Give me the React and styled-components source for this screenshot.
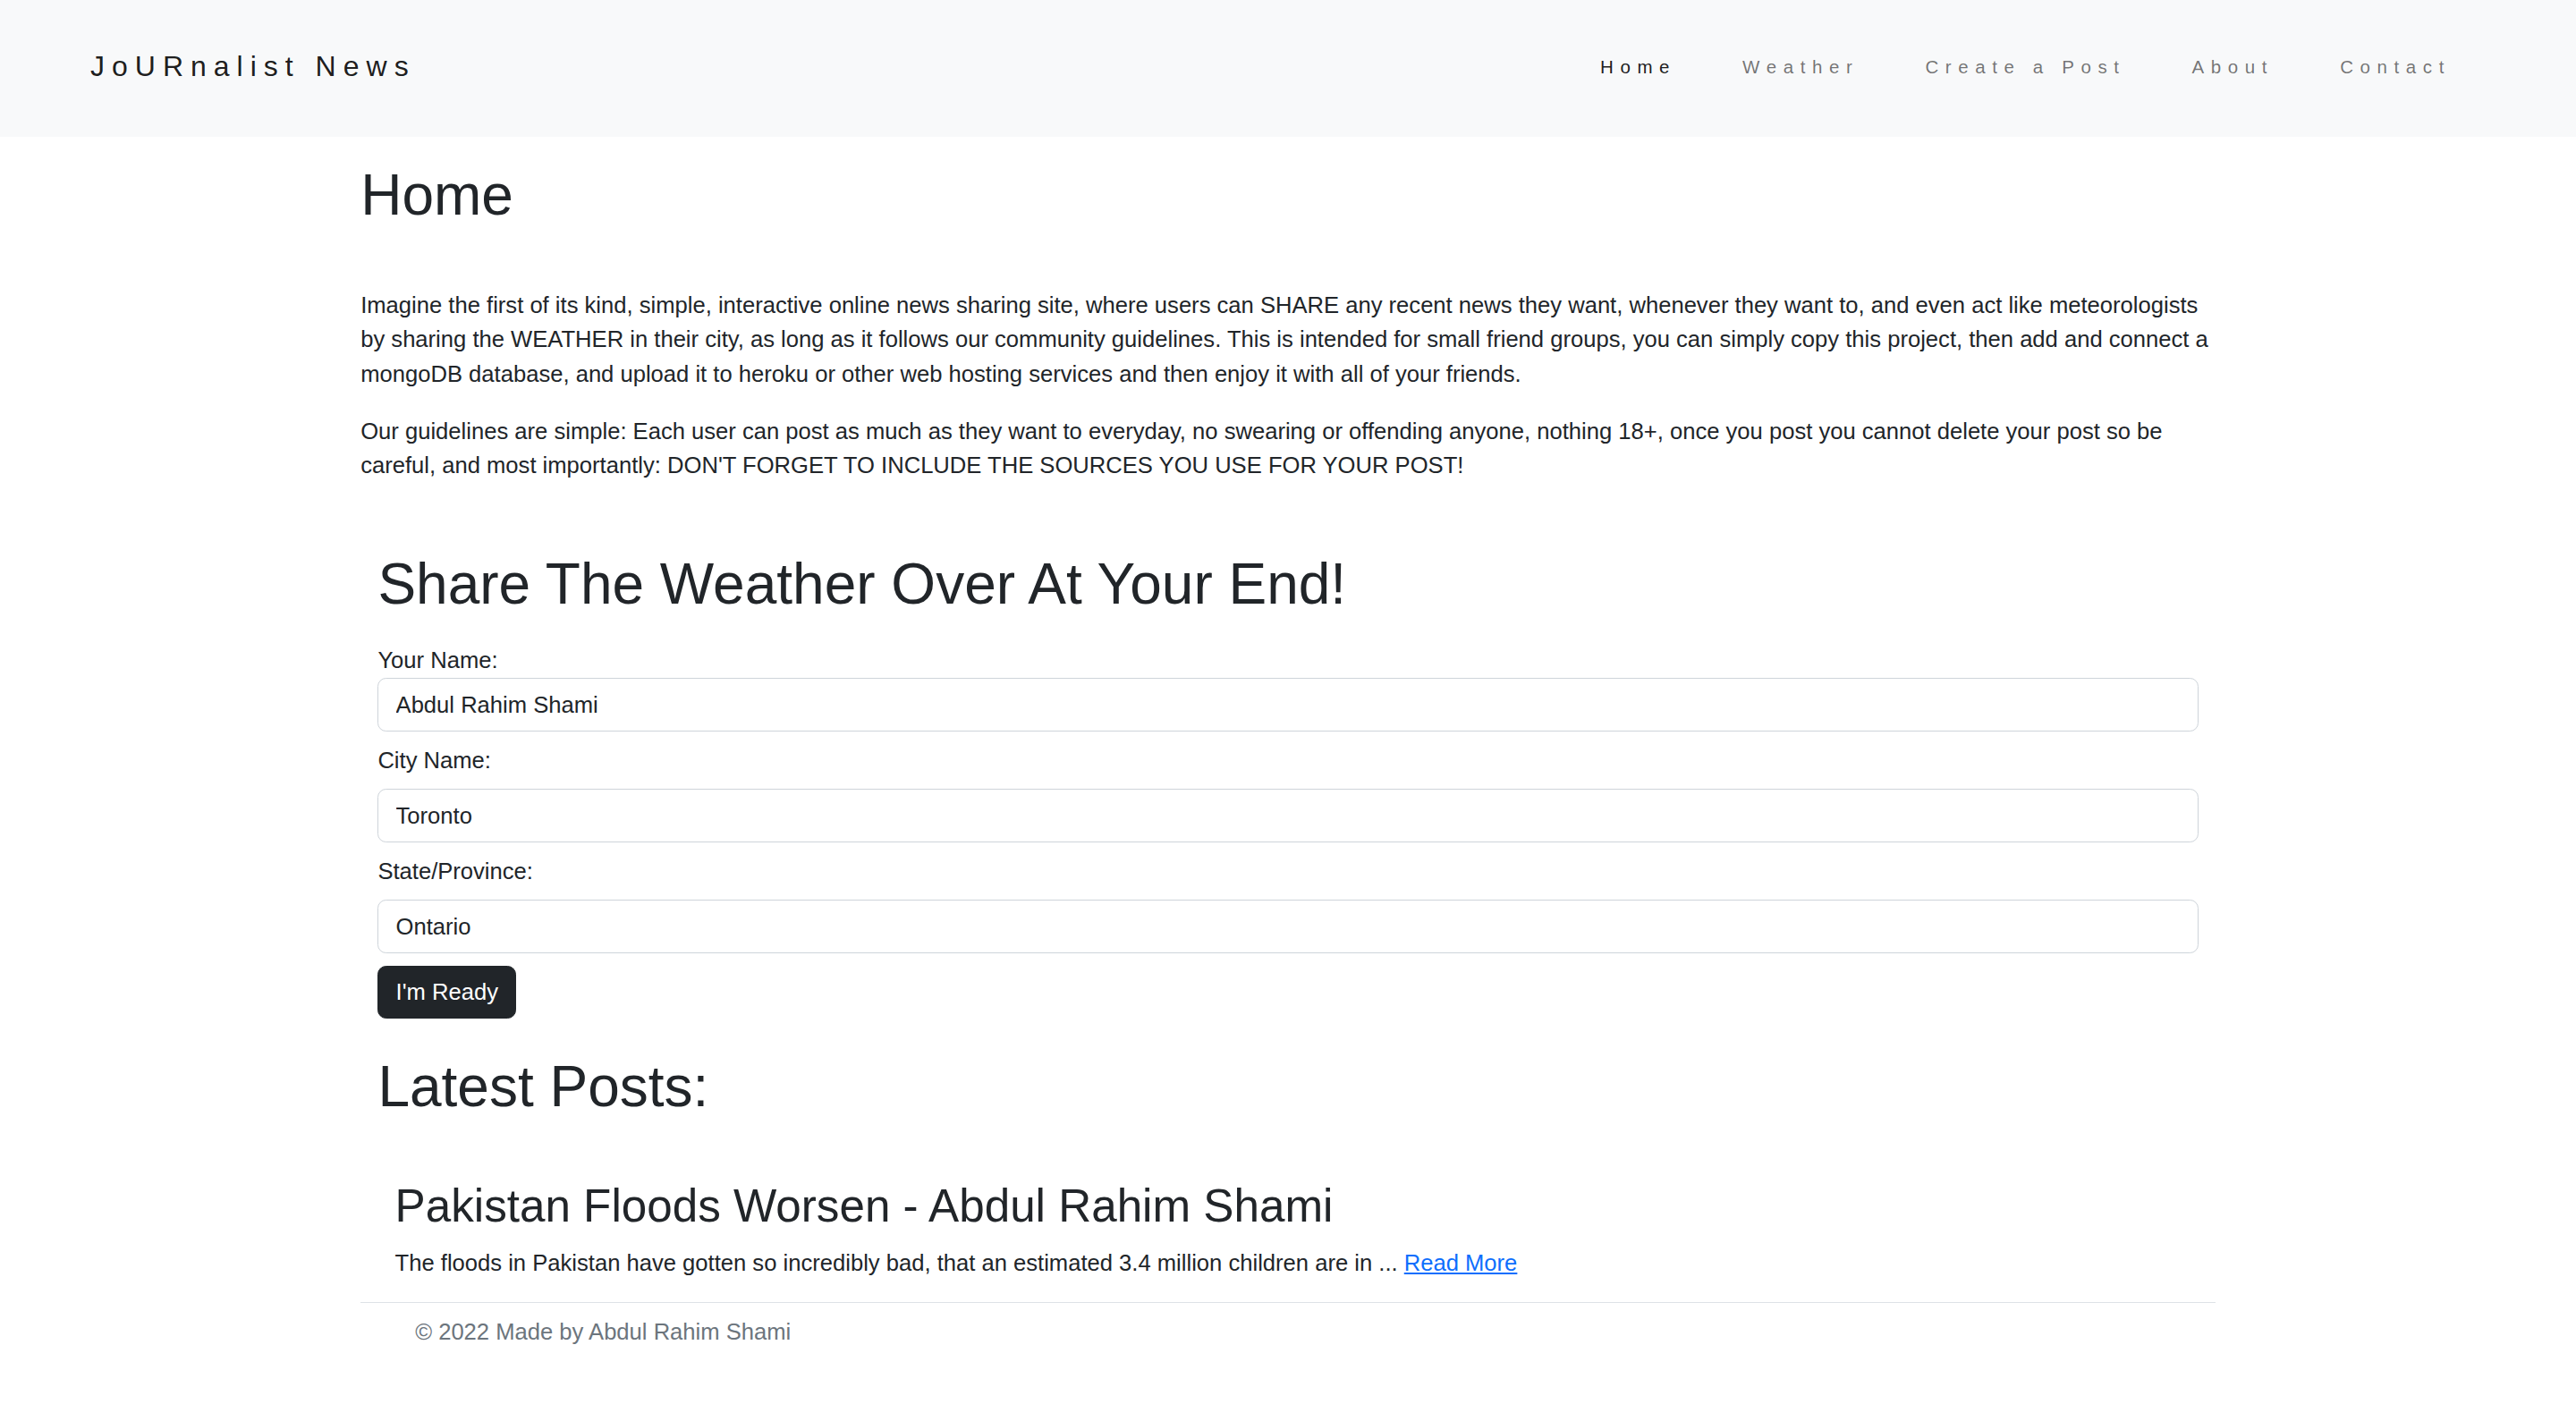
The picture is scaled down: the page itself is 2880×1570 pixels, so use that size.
import React from 'react'
import styled, { createGlobalStyle } from 'styled-components'

const GlobalStyle = createGlobalStyle`
  * {
    box-sizing: border-box;
  }
  html, body {
    margin: 0;
    padding: 0;
    background-color: #fff;
    color: #212529;
    font-family: "Liberation Sans", Arial, Helvetica, sans-serif;
    font-size: 25.6px;
    line-height: 1.5;
  }
`

const navItems = ['Home', 'Weather', 'Create a Post', 'About', 'Contact']

export default function App() {
  return (
    <>
      <GlobalStyle />
      <Navbar>
        <Brand href="#">JoURnalist News</Brand>
        <NavList>
          {navItems.map((item, idx) => (
            <li key={item}>
              <NavLink href="#" $active={idx === 0}>{item}</NavLink>
            </li>
          ))}
        </NavList>
      </Navbar>

      <Container>
        <PageTitle>Home</PageTitle>
        <Intro>
          Imagine the first of its kind, simple, interactive online news sharing site, where users can SHARE any recent news they want, whenever they want to, and even act like meteorologists by sharing the WEATHER in their city, as long as it follows our community guidelines. This is intended for small friend groups, you can simply copy this project, then add and connect a mongoDB database, and upload it to heroku or other web hosting services and then enjoy it with all of your friends.
        </Intro>
        <Intro>
          Our guidelines are simple: Each user can post as much as they want to everyday, no swearing or offending anyone, nothing 18+, once you post you cannot delete your post so be careful, and most importantly: DON'T FORGET TO INCLUDE THE SOURCES YOU USE FOR YOUR POST!
        </Intro>

        <Section>
          <SectionTitle>Share The Weather Over At Your End!</SectionTitle>
          <Form onSubmit={(e) => e.preventDefault()}>
            <Label $flush>Your Name:</Label>
            <Input type="text" defaultValue="Abdul Rahim Shami" />
            <Label>City Name:</Label>
            <Input type="text" defaultValue="Toronto" />
            <Label>State/Province:</Label>
            <Input type="text" defaultValue="Ontario" />
            <Button type="submit">I'm Ready</Button>
          </Form>

          <SectionTitle $top="37.4px">Latest Posts:</SectionTitle>
          <Post>
            <PostTitle>Pakistan Floods Worsen - Abdul Rahim Shami</PostTitle>
            <PostText>
              The floods in Pakistan have gotten so incredibly bad, that an estimated 3.4 million children are in ... <ReadMore href="#">Read More</ReadMore>
            </PostText>
          </Post>
        </Section>

        <Footer>© 2022 Made by Abdul Rahim Shami</Footer>
      </Container>
    </>
  )
}

const Navbar = styled.nav`
    display: flex;
    justify-content: space-between;
    align-items: center;
    background-color: #f8f9fa;
    padding: 50px 103px 54px 101px;
`

const Brand = styled.a`
    font-size: 32px;
    line-height: 49px;
    letter-spacing: 8px;
    color: rgba(0, 0, 0, 0.9);
    text-decoration: none;
`

const NavList = styled.ul`
    display: flex;
    list-style: none;
    margin: 0;
    padding: 0;
`

const NavLink = styled.a`
    display: block;
    padding: 0 37px;
    font-size: 20.5px;
    line-height: 30px;
    letter-spacing: 7.6px;
    text-decoration: none;
    color: ${(p) => (p.$active ? 'rgba(0, 0, 0, 0.9)' : 'rgba(0, 0, 0, 0.55)')};
`

const Container = styled.main`
    max-width: 2112px;
    margin: 0 auto;
    padding: 0 19.2px;
`

const PageTitle = styled.h1`
    font-size: 64px;
    line-height: 1.2;
    font-weight: 400;
    margin: 27px 0 65px;
`

const Intro = styled.p`
    margin: 0 0 25.6px;
`

const Section = styled.section`
    padding: 50.5px 19.2px 0;
`

const SectionTitle = styled.h1`
    font-size: 64px;
    line-height: 1.2;
    font-weight: 400;
    margin: ${(p) => p.$top || '0'} 0 12.8px;
`

const Form = styled.form`
    display: flex;
    flex-direction: column;
    align-items: flex-start;
`

const Label = styled.label`
    display: block;
    margin: 13.5px 0 ${(p) => (p.$flush ? '1px' : '12.8px')};
`

const Input = styled.input`
    display: block;
    width: 100%;
    padding: 9.6px 19.2px;
    font-family: inherit;
    font-size: 25.6px;
    line-height: 38.4px;
    color: #212529;
    background-color: #fff;
    border: 1.6px solid #ced4da;
    border-radius: 9.6px;
    outline: none;
`

const Button = styled.button`
    margin-top: 13.5px;
    padding: 9.6px 19.2px;
    font-family: inherit;
    font-size: 25.6px;
    line-height: 38.4px;
    color: #fff;
    background-color: #212529;
    border: 1.6px solid #212529;
    border-radius: 9.6px;
    cursor: pointer;
`

const Post = styled.article`
    margin-top: 65px;
    padding: 0 19.2px;
`

const PostTitle = styled.h2`
    font-size: 51.2px;
    line-height: 1.2;
    font-weight: 400;
    margin: 0 0 12.8px;
`

const PostText = styled.p`
    margin: 0 0 25.4px;
`

const ReadMore = styled.a`
    color: #0d6efd;
    text-decoration: underline;
`

const Footer = styled.footer`
    border-top: 1.6px solid #dee2e6;
    padding: 13px 0 0 61px;
    color: #6c757d;
`
